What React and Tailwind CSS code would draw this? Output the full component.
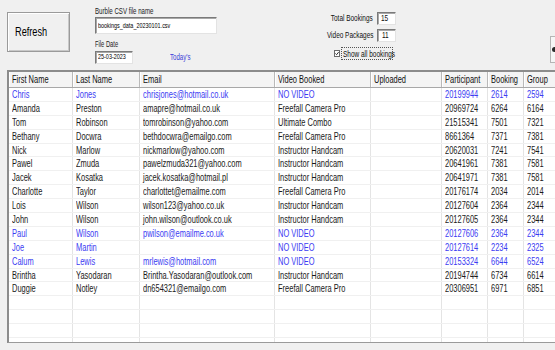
import React from 'react';

const rows = [
    ['Chris', 'Jones', 'chrisjones@hotmail.co.uk', 'NO VIDEO', '20199944', '2614', '2594', true],
    ['Amanda', 'Preston', 'amapre@hotmail.co.uk', 'Freefall Camera Pro', '20969724', '6264', '6164'],
    ['Tom', 'Robinson', 'tomrobinson@yahoo.com', 'Ultimate Combo', '21515341', '7501', '7321'],
    ['Bethany', 'Docwra', 'bethdocwra@emailgo.com', 'Freefall Camera Pro', '8661364', '7371', '7381'],
    ['Nick', 'Marlow', 'nickmarlow@yahoo.com', 'Instructor Handcam', '20620031', '7241', '7541'],
    ['Pawel', 'Zmuda', 'pawelzmuda321@yahoo.com', 'Instructor Handcam', '20641961', '7381', '7581'],
    ['Jacek', 'Kosatka', 'jacek.kosatka@hotmail.pl', 'Instructor Handcam', '20641971', '7381', '7581'],
    ['Charlotte', 'Taylor', 'charlottet@emailme.com', 'Freefall Camera Pro', '20176174', '2034', '2014'],
    ['Lois', 'Wilson', 'wilson123@yahoo.co.uk', 'Instructor Handcam', '20127604', '2364', '2344'],
    ['John', 'Wilson', 'john.wilson@outlook.co.uk', 'Instructor Handcam', '20127605', '2364', '2344'],
    ['Paul', 'Wilson', 'pwilson@emailme.co.uk', 'NO VIDEO', '20127606', '2364', '2344', true],
    ['Joe', 'Martin', '', 'NO VIDEO', '20127614', '2234', '2325', true],
    ['Calum', 'Lewis', 'mrlewis@hotmail.com', 'NO VIDEO', '20153324', '6644', '6524', true],
    ['Brintha', 'Yasodaran', 'Brintha.Yasodaran@outlook.com', 'Instructor Handcam', '20194744', '6734', '6614'],
    ['Duggie', 'Notley', 'dn654321@emailgo.com', 'Freefall Camera Pro', '20306951', '6971', '6851'],
];

const headers = ['First Name', 'Last Name', 'Email', 'Video Booked', 'Uploaded', 'Participant', 'Booking', 'Group'];
const widths = ['w-[64px]', 'w-[67px]', 'w-[135px]', 'w-[96px]', 'w-[71px]', 'w-[46px]', 'w-[36px]', 'w-[70px]'];

// narrow text, the screenshot is squeezed sideways
const T = ({ children, className = '' }) => (
    <span className={`inline-block origin-left scale-x-[0.68] whitespace-nowrap ${className}`}>{children}</span>
);

const Inset = ({ className = '', children }) => (
    <div className={`bg-white border-t border-l border-[#7a7a7a] border-b border-r border-b-[#e3e3e3] border-r-[#e3e3e3] shadow-[inset_1px_1px_0_#a8a8a8] flex items-center ${className}`}>
        {children}
    </div>
);

const DataRow = ({ row }) => {
    const cells = row ? [row[0], row[1], row[2], row[3], '', row[4], row[5], row[6]] : [];
    const blue = row && row[7];
    return (
        <div className={`flex h-[13.9px] shrink-0 border-b border-[#f0f0f0] ${blue ? 'text-[#3b3bf2]' : 'text-[#1a1a1a]'}`}>
            {widths.map((w, i) => (
                <div key={i} className={`${w} shrink-0 border-r border-[#e4e4e4] pl-[3px] leading-[13px] overflow-hidden`}>
                    {cells[i] ? <T>{cells[i]}</T> : null}
                </div>
            ))}
        </div>
    );
};

export default function App() {
    return (
        <div className="w-[555px] h-[350px] overflow-hidden bg-[#f0f0f0] font-['Liberation_Sans',Arial,sans-serif] text-black">
            {/* Top controls */}
            <div className="flex h-[70px]">
                <button className="ml-[7px] mt-[12px] w-[63px] h-[40px] shrink-0 bg-[#f0f0f0] border border-[#9a9a9a] shadow-[inset_1px_1px_0_#ffffff,inset_-1px_-1px_0_#c8c8c8] flex items-center justify-center text-[13.5px]">
                    <T className="origin-center">Refresh</T>
                </button>

                <div className="ml-[25px] w-[122px] shrink-0 flex flex-col">
                    <div className="mt-[6px] h-[10px] leading-[10px] text-[9px] text-[#222]">
                        <T>Burble CSV file name</T>
                    </div>
                    <Inset className="mt-[1px] h-[17px] pl-[2px] text-[8px]">
                        <T className="scale-x-[0.64]">bookings_data_20230101.csv</T>
                    </Inset>
                    <div className="mt-[5px] h-[10px] leading-[10px] text-[8.5px] text-[#222]">
                        <T>File Date</T>
                    </div>
                    <div className="mt-[1px] flex items-center">
                        <Inset className="w-[38px] h-[13px] pl-[2px] text-[8px]">
                            <T className="scale-x-[0.64]">25-03-2023</T>
                        </Inset>
                        <div className="ml-[37px] mt-[1px] text-[9px] text-[#3c3cd8]">
                            <T>Today's</T>
                        </div>
                    </div>
                </div>

                <div className="ml-[83px] w-[96px] shrink-0 flex flex-col items-end text-[9.5px] text-[#111]">
                    <div className="mt-[12px] flex items-center h-[13px]">
                        <T className="origin-right">Total Bookings</T>
                        <Inset className="ml-[4px] w-[19px] h-[13px] justify-center text-[9.5px]">
                            <T className="origin-center">15</T>
                        </Inset>
                    </div>
                    <div className="mt-[4px] flex items-center h-[13px]">
                        <T className="origin-right">Video Packages</T>
                        <Inset className="ml-[4px] w-[19px] h-[13px] justify-center text-[9.5px]">
                            <T className="origin-center">11</T>
                        </Inset>
                    </div>
                    <div className="mt-[5px] mr-[3px] flex items-center h-[13px]">
                        <div className="w-[6px] h-[7px] bg-white border border-[#6a6a6a] flex items-center justify-center">
                            <svg width="5" height="5" viewBox="0 0 5 5">
                                <path d="M0.5 2.5 L2 4 L4.5 0.8" fill="none" stroke="#111" strokeWidth="1.1" />
                            </svg>
                        </div>
                        <div className="ml-[1px] w-[52px] h-[13px] border border-dotted border-[#555] pl-[1px] leading-[11px]">
                            <T>Show all bookings</T>
                        </div>
                    </div>
                </div>

                <div className="ml-auto mt-[36px] w-[5px] h-[27px] bg-[#f6f6f6] border-l border-t border-b border-[#b5b5b5] flex items-center justify-end">
                    <div className="w-[3px] h-[5px] rounded-l-full bg-[#2a2a2a]" />
                </div>
            </div>

            {/* Bookings grid */}
            <div className="ml-[7px] h-[273px] w-[600px] flex flex-col overflow-hidden bg-white border-t-2 border-l-2 border-b border-[#8c8c8c] border-b-[#9a9a9a] text-[11px]">
                <div className="flex h-[16px] shrink-0 bg-[#f4f4f4] border-b border-[#a8a8a8]">
                    {headers.map((h, i) => (
                        <div key={h} className={`${widths[i]} shrink-0 border-r border-[#b9b9b9] shadow-[inset_1px_0_0_#ffffff] pl-[3px] leading-[15px] text-[#111]`}>
                            <T>{h}</T>
                        </div>
                    ))}
                </div>
                {rows.map((r, i) => (
                    <DataRow key={i} row={r} />
                ))}
                <DataRow />
                <DataRow />
                <DataRow />
                <DataRow />
            </div>
        </div>
    );
}
